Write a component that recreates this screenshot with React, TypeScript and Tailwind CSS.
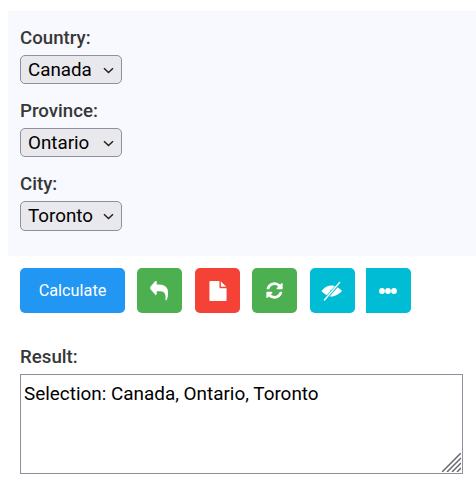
const labelCls = "block text-[18.7px] leading-[24px] font-medium text-[#373737] mb-[5px]";

function Field({ label, value, options, tall }: { label: string; value: string; options: string[]; tall?: boolean }) {
  return (
    <div className="mb-[15px]">
      <label className={labelCls}>{label}</label>
      <div className="relative w-[102px]">
        <select
          defaultValue={value}
          className={`block w-full ${tall ? "h-[30px]" : "h-[29px]"} text-[18.8px] text-black bg-[#e9e9ed] border border-[#8f8f9d] rounded-[5px] pl-[7px] appearance-none`}
        >
          {options.map((o) => (
            <option key={o}>{o}</option>
          ))}
        </select>
        <svg className="absolute right-[8px] top-[12px] pointer-events-none" width="11" height="7" viewBox="0 0 11 7" fill="none">
          <path d="M1 1.2 L5.5 5.5 L10 1.2" stroke="#222" strokeWidth="1.5" />
        </svg>
      </div>
    </div>
  );
}

function IconButton({ color, rounded, children, className }: { color: string; rounded?: string; children: React.ReactNode; className?: string }) {
  return (
    <button className={`w-[45px] h-[45px] flex items-center justify-center text-white ${color} ${rounded ?? "rounded-[5px]"} ${className ?? ""}`}>
      {children}
    </button>
  );
}

export default function App() {
  return (
    <div className="font-['Roboto',sans-serif] w-[476px] h-[490px] bg-white overflow-hidden pl-[8px] pt-[11px]">
      <div className="bg-[#f8f9ff] h-[245px] pl-[12px] pt-[15px]">
        <Field label="Country:" value="Canada" options={["Canada", "USA"]} />
        <Field label="Province:" value="Ontario" options={["Ontario", "Quebec"]} />
        <Field label="City:" value="Toronto" options={["Toronto", "Ottawa"]} tall />
      </div>
      <div className="flex pl-[12px] mt-[12px]">
        <button className="w-[105px] h-[45px] bg-[#2196f3] text-white text-[16.3px] rounded-[5px] pt-[1px]">Calculate</button>
        <IconButton color="bg-[#4caf50]" className="ml-[12px]">
          <svg width="18" height="20" viewBox="0 64 1792 1664" preserveAspectRatio="none" fill="currentColor" stroke="currentColor" strokeWidth="50" className="-ml-[2px]">
            <path d="M1792 1120q0 166-127 451-3 7-10.5 24t-13.5 30-13 22q-12 17-28 17-15 0-23.5-10t-8.5-25q0-9 2.5-26.5t2.5-23.5q5-68 5-123 0-101-17.5-181t-48.5-138.5-80-101-105.5-69.5-133-42.5-154-21.5-175.5-6h-224v256q0 26-19 45t-45 19-45-19l-512-512q-19-19-19-45t19-45l512-512q19-19 45-19t45 19 19 45v256h224q713 0 875 403 53 134 53 333z" />
          </svg>
        </IconButton>
        <IconButton color="bg-[#f44336]" className="ml-[13px]">
          <svg width="20" height="20" viewBox="0 0 1792 1792" fill="currentColor">
            <path d="M1596 476q14 14 28 36h-472v-472q22 14 36 28zm-476 164h544v1056q0 40-28 68t-68 28h-1344q-40 0-68-28t-28-68v-1600q0-40 28-68t68-28h800v544q0 40 28 68t68 28z" />
          </svg>
        </IconButton>
        <IconButton color="bg-[#4caf50]" className="ml-[12px]">
          <svg width="19" height="19" viewBox="0 0 1792 1792" fill="currentColor">
            <path d="M1639 1056q0 5-1 7-64 268-268 434.5t-478 166.5q-146 0-282.5-55t-243.5-157l-129 129q-19 19-45 19t-45-19-19-45v-448q0-26 19-45t45-19h448q26 0 45 19t19 45-19 45l-137 137q71 66 161 102t187 36q134 0 250-65t186-179q11-17 53-117 8-23 30-23h192q13 0 22.5 9.5t9.5 22.5zm25-800v448q0 26-19 45t-45 19h-448q-26 0-45-19t-19-45 19-45l138-138q-148-137-349-137-134 0-250 65t-186 179q-11 17-53 117-8 23-30 23h-199q-13 0-22.5-9.5t-9.5-22.5v-7q65-268 270-434.5t480-166.5q146 0 284 55.5t245 156.5l130-129q19-19 45-19t45 19 19 45z" />
          </svg>
        </IconButton>
        <IconButton color="bg-[#00bcd4]" className="ml-[13px]">
          <svg width="22" height="22" viewBox="0 0 22 22" fill="none" className="-ml-[2px]">
            <path d="M0.5 11 C4 6.5 8 5.5 10.5 5.5 C13 5.5 17 6.5 21 11 C17 15 13 16.5 10.5 16.5 C8 16.5 4 15 0.5 11 Z" fill="white" />
            <circle cx="10.5" cy="11" r="1.2" fill="#00bcd4" />
            <path d="M4 19.5 L18.5 3" stroke="#00bcd4" strokeWidth="3" />
            <path d="M3 20.5 L19 2" stroke="white" strokeWidth="1.4" />
          </svg>
        </IconButton>
        <IconButton color="bg-[#00bcd4]" rounded="rounded-r-[5px]" className="ml-[11px]">
          <svg width="18" height="6" viewBox="0 0 18 6" fill="white" className="-ml-[2px]">
            <circle cx="3" cy="3" r="2.9" />
            <circle cx="9" cy="3" r="2.9" />
            <circle cx="15" cy="3" r="2.9" />
          </svg>
        </IconButton>
      </div>
      <div className="pl-[12px] mt-[32px]">
        <label className={labelCls}>Result:</label>
        <div className="relative w-[443px]">
          <textarea
            readOnly
            defaultValue="Selection: Canada, Ontario, Toronto"
            className="block w-full h-[100px] text-[18.9px] leading-[22px] text-black border border-[#8f8f9d] pl-[3px] pt-[8px] resize-none outline-none"
          />
          <svg className="absolute right-[2px] bottom-[2px] pointer-events-none" width="19" height="19" viewBox="0 0 19 19" fill="none" stroke="#666" strokeWidth="1.5">
            <path d="M0 19 L19 0" />
            <path d="M5 19 L19 5" />
            <path d="M10 19 L19 10" />
            <path d="M15 19 L19 15" />
          </svg>
        </div>
      </div>
    </div>
  );
}
